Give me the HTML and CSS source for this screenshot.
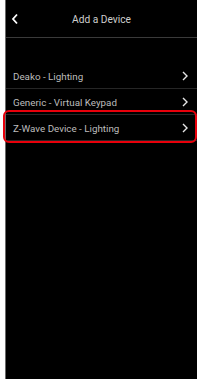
FILE: index.html
```html
<!DOCTYPE html>
<html>
<head>
<meta charset="utf-8">
<link rel="stylesheet" href="styles.css">
</head>
<body>
<div class="screen">
  <header class="header">
    <svg class="back" width="8" height="12" viewBox="0 0 8 12"><path d="M6 1.5 L2 6 L6 10.5" fill="none" stroke="#fff" stroke-width="1.8"/></svg>
    <div class="title">Add a Device</div>
  </header>
  <ul class="list">
    <li class="row"><span>Deako - Lighting</span><svg class="chev" width="6" height="10" viewBox="0 0 6 10"><path d="M1 1 L5 5 L1 9" fill="none" stroke="#e6e6e6" stroke-width="1.4"/></svg></li>
    <li class="row"><span>Generic - Virtual Keypad</span><svg class="chev" width="6" height="10" viewBox="0 0 6 10"><path d="M1 1 L5 5 L1 9" fill="none" stroke="#e6e6e6" stroke-width="1.4"/></svg></li>
    <li class="row highlighted"><span>Z-Wave Device - Lighting</span><svg class="chev" width="6" height="10" viewBox="0 0 6 10"><path d="M1 1 L5 5 L1 9" fill="none" stroke="#e6e6e6" stroke-width="1.4"/></svg></li>
  </ul>
</div>
</body>
</html>
```
FILE: styles.css
```css
html, body {
  margin: 0;
  padding: 0;
  background: #fff;
}
.screen {
  margin-left: 5px;
  width: 192px;
  height: 379px;
  background: #000;
  border-left: 1px solid #6a6a6a;
  box-sizing: border-box;
  font-family: Roboto, "Liberation Sans", sans-serif;
  position: relative;
}
.header {
  height: 37px;
  border-bottom: 1px solid #3a3a3a;
  display: flex;
  align-items: center;
  position: relative;
}
.back {
  margin-left: 5px;
  margin-top: 1px;
}
.title {
  position: absolute;
  left: 0;
  right: 0;
  text-align: center;
  color: #cfcfcf;
  font-size: 10.2px;
  top: 13.5px;
}
.list {
  list-style: none;
  margin: 25px 0 0 0;
  padding: 0;
}
.row {
  height: 25px;
  border-bottom: 1px solid #262626;
  display: flex;
  align-items: center;
  justify-content: space-between;
  padding: 0 9px 0 7px;
  color: #bdbdbd;
  font-size: 9.8px;
  position: relative;
}
.row span {
  margin-top: 1px;
}
.highlighted::after {
  content: "";
  position: absolute;
  left: -3px;
  right: 0px;
  top: -5px;
  bottom: -3px;
  border: 2px solid #e8000b;
  border-radius: 6px;
}
```
